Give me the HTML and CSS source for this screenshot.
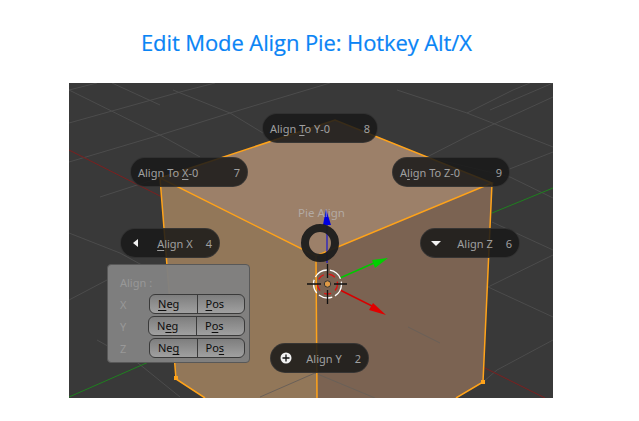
FILE: index.html
```html
<!DOCTYPE html>
<html lang="en">
<head>
  <meta charset="UTF-8" />
  <title>Edit Mode Align Pie</title>
  <link rel="stylesheet" href="styles.css">
</head>
<body>
  <h1 class="title">Edit Mode Align Pie: Hotkey Alt/X</h1>

  <div class="viewport">
    <svg class="scene" viewBox="69 83 484 315" width="484" height="315">
      <!-- grid -->
      <g class="grid">
        <path d="M69 90L97 83M69 123L112 111L180 92L215 83M69 162L160 135L230 113L330 83M100 197L137 185L160 178" />
        <path d="M69 90L160 135L200 157M173 90L230 113L263 133M112 83L160 105M397 90L467 113L553 147M377 137L427 157L510 177L553 198M492 222L553 250M488 287L553 317" />
        <path d="M427 157L470 135L553 97M467 113L513 90L530 83M507 170L553 152M488 287L553 255M483 382L497 370L553 340M490 110L553 83" />
        <path d="M69 233L120 253L160 275M97 340L138 363L180 397M69 300L107 280" />
      </g>

      <!-- axis lines -->
      <path class="axis-red" d="M69 150L162 197M440 343L483 367L545 398" />
      <path class="axis-green" d="M69 397L176 350M492 213L553 188" />

      <!-- cube -->
      <polygon class="face-top" points="160,178 335,120 492,183 316,256" />
      <polygon class="face-left" points="160,178 316,256 317,398 205,398 176,379" />
      <polygon class="face-right" points="316,256 492,183 483,382 456,398 317,398" />
      <path class="face-grid" d="M260 397L315 373L375 398M408 327L440 343" />
      <path class="edge" d="M160 178L335 120L492 183L316 256ZM316 256L317 398M160 178L176 379L205 398M492 183L483 382L456 398" />
      <rect class="vertex" x="174" y="376" width="4" height="4" />
      <rect class="vertex" x="481" y="380" width="4" height="4" />

      <!-- manipulator -->
      <path class="arm-blue" d="M327 224V263" />
      <polygon class="cone-blue" points="326,209 331,225 323,225" />
      <path class="arm-green" d="M340 278L374 263" />
      <polygon class="cone-green" points="388,258 375,268 372,260" />
      <path class="arm-red" d="M340 290L372 306" />
      <polygon class="cone-red" points="386,315 369,310 373,303" />

      <!-- 3d cursor -->
      <circle class="cursor-white" cx="327.5" cy="284" r="14" />
      <circle class="cursor-red" cx="327.5" cy="284" r="10" />
      <path class="cursor-cross" d="M307 284H321M334 284H347M327.5 264V278M327.5 290V304" />
      <circle class="cursor-dot" cx="327.5" cy="284" r="3.2" />

      <!-- pie centre -->
      <circle class="pie-ring" cx="320" cy="243" r="15" />
    </svg>

    <div class="pie-title">Pie Align</div>

    <div class="pie-btn btn-y0"><span>Align <u>T</u>o Y-0</span><span>8</span></div>
    <div class="pie-btn btn-x0"><span>Align To <u>X</u>-0</span><span>7</span></div>
    <div class="pie-btn btn-z0"><span>A<u>l</u>ign To Z-0</span><span>9</span></div>

    <div class="pie-btn btn-x">
      <svg class="pie-icon" viewBox="0 0 12 12" width="12" height="12"><polygon points="3,6 8,2 8,10" /></svg>
      <span class="pie-label"><u>A</u>lign X</span><span>4</span>
    </div>
    <div class="pie-btn btn-z">
      <svg class="pie-icon" viewBox="0 0 12 12" width="12" height="12"><polygon points="1,4 11,4 6,9" /></svg>
      <span class="pie-label">Align Z</span><span>6</span>
    </div>
    <div class="pie-btn btn-yy">
      <svg class="pie-icon" viewBox="0 0 12 12" width="12" height="12"><circle cx="6" cy="6" r="5.5" /><path class="plus" d="M6 2.5V9.5M2.5 6H9.5" /></svg>
      <span class="pie-label">Align Y</span><span>2</span>
    </div>

    <div class="panel">
      <div class="panel-title">Align :</div>
      <div class="panel-row">
        <span class="axis-name">X</span>
        <div class="seg"><span><u>N</u>eg</span><span><u>P</u>os</span></div>
      </div>
      <div class="panel-row row-shift">
        <span class="axis-name">Y</span>
        <div class="seg"><span>N<u>e</u>g</span><span>P<u>o</u>s</span></div>
      </div>
      <div class="panel-row">
        <span class="axis-name">Z</span>
        <div class="seg"><span>Ne<u>g</u></span><span>Po<u>s</u></span></div>
      </div>
    </div>
  </div>
</body>
</html>
```

FILE: styles.css
```css
* {
  box-sizing: border-box;
}

html, body {
  height: 100%;
}

body {
  margin: 0;
  background: #fff;
  overflow: hidden;
  font-family: "Noto Sans", sans-serif;
}

u {
  text-decoration-skip-ink: none;
  text-underline-offset: 2px;
}

.title {
  margin: 0;
  height: 83px;
  padding: 26px 0 0 141px;
  font-family: "Open Sans", sans-serif;
  font-weight: 400;
  font-size: 22px;
  letter-spacing: -0.1px;
  line-height: 32px;
  color: #0a84f5;
  -webkit-text-stroke: 0.2px #0a84f5;
}

.viewport {
  position: relative;
  width: 484px;
  height: 315px;
  margin-left: 69px;
  background: #393939;
  overflow: hidden;
}

.scene {
  display: block;
}

/* scene */
.grid path {
  fill: none;
  stroke: #4c4c4c;
  stroke-width: 1;
}

.axis-red {
  fill: none;
  stroke: #7d1f1f;
}

.axis-green {
  fill: none;
  stroke: #1f801f;
}

.face-top {
  fill: #9c8069;
}

.face-left {
  fill: #927759;
}

.face-right {
  fill: #7b6352;
}

.face-grid {
  fill: none;
  stroke: #6a6058;
}

.edge {
  fill: none;
  stroke: #ffa31a;
  stroke-width: 1.5;
}

.vertex {
  fill: #ffa31a;
}

.arm-blue {
  stroke: #0000e0;
  stroke-width: 1;
}

.cone-blue {
  fill: #0000e0;
}

.arm-green {
  stroke: #00c800;
  stroke-width: 1.5;
}

.cone-green {
  fill: #00d000;
}

.arm-red {
  stroke: #d80000;
  stroke-width: 1.5;
}

.cone-red {
  fill: #e00000;
}

.cursor-white {
  fill: none;
  stroke: #fff;
  stroke-width: 1.3;
  stroke-dasharray: 14 3;
}

.cursor-red {
  fill: none;
  stroke: #e01010;
  stroke-width: 1.3;
  stroke-dasharray: 7 5;
}

.cursor-cross {
  fill: none;
  stroke: #111;
  stroke-width: 1.3;
}

.cursor-dot {
  fill: #e09a45;
  stroke: #333;
}

.pie-ring {
  fill: none;
  stroke: rgba(28, 28, 28, 0.94);
  stroke-width: 8;
}

/* pie menu */
.pie-title {
  position: absolute;
  left: 229px;
  top: 122px;
  font-size: 11.5px;
  line-height: 16px;
  color: rgba(190, 190, 190, 0.7);
}

.pie-btn {
  position: absolute;
  display: flex;
  align-items: center;
  justify-content: space-between;
  height: 30px;
  padding: 0 7px 0 7px;
  border: 1px solid rgba(70, 70, 70, 0.5);
  border-radius: 15px;
  background: rgba(24, 24, 24, 0.86);
  color: #a0a0a0;
  font-size: 11px;
  white-space: nowrap;
}

.btn-y0 {
  left: 193px;
  top: 30px;
  width: 116px;
}

.btn-x0 {
  left: 61px;
  top: 74px;
  width: 118px;
}

.btn-z0 {
  left: 323px;
  top: 74px;
  width: 118px;
}

.btn-x {
  left: 51px;
  top: 145px;
  width: 100px;
}

.btn-z {
  left: 351px;
  top: 145px;
  width: 100px;
}

.btn-yy {
  left: 201px;
  top: 260px;
  width: 99px;
}

.pie-icon {
  flex: none;
  margin-left: 2px;
  fill: #f2f2f2;
}

.pie-icon .plus {
  fill: none;
  stroke: #111;
  stroke-width: 1.3;
}

.pie-label {
  margin-left: auto;
  margin-right: 13px;
}

/* floating panel */
.panel {
  position: absolute;
  left: 38px;
  top: 181px;
  width: 143px;
  height: 99px;
  padding: 10px 4px 0 12px;
  border: 1px solid #585858;
  border-radius: 4px;
  background: rgba(128, 128, 128, 0.97);
  font-size: 11px;
}

.panel-title {
  height: 19px;
  line-height: 16px;
  color: #989898;
}

.panel-row {
  display: flex;
  align-items: center;
  height: 20px;
  margin-bottom: 2px;
}

.row-shift {
  margin-left: -1px;
}

.axis-name {
  width: 29px;
  color: #989898;
}

.row-shift .axis-name {
  padding-left: 1px;
}

.seg {
  display: flex;
  flex: 1;
  height: 20px;
  border: 1px solid #3a3a3a;
  border-radius: 6px;
  background: linear-gradient(#7e7e7e, #a0a0a0);
  color: #0c0c0c;
  line-height: 18px;
}

.seg span {
  flex: 1;
  padding-left: 8px;
}

.seg span + span {
  border-left: 1px solid #3a3a3a;
}
```
